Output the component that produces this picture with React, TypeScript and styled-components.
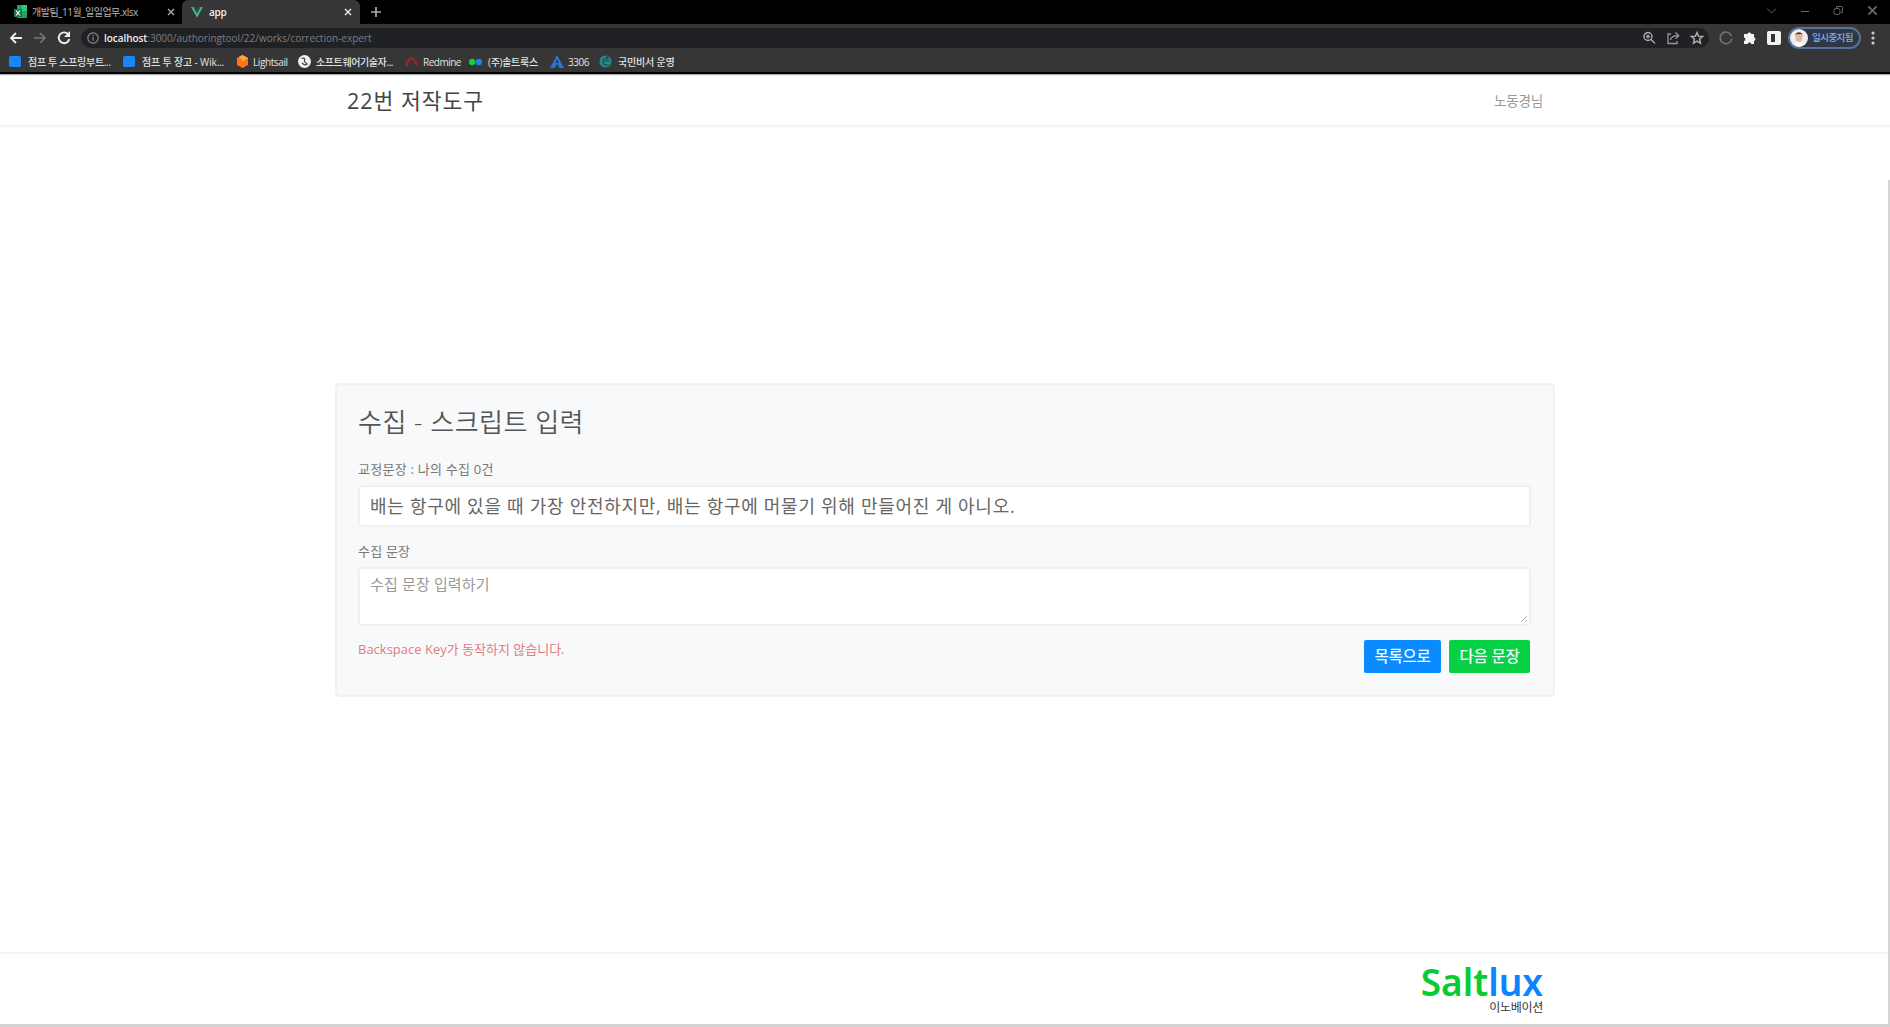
import React from "react";
import styled, { createGlobalStyle } from "styled-components";

const GlobalStyle = createGlobalStyle`
  *, *::before, *::after { box-sizing: border-box; }
  html, body { margin: 0; padding: 0; background: #fff; overflow: hidden; }
  body { font-family: "Open Sans", "Noto Sans CJK KR", sans-serif; }
  svg { display: block; flex: none; }
`;

const Screen = styled.div`
  display: flex;
  flex-direction: column;
  position: relative;
  width: 1890px;
  height: 1027px;
  background: #fff;
  border-bottom: 3px solid #d2d2d2;
`;

const Label = styled.span<{ $size: number; $color: string; $gap?: number; $weight?: number }>`
  font-size: ${(p) => p.$size}px;
  line-height: 1.4;
  font-weight: ${(p) => p.$weight ?? 400};
  letter-spacing: ${(p) => p.$gap ?? 0}px;
  color: ${(p) => p.$color};
  white-space: nowrap;
`;

/* Browser window */
const Browser = styled.header`
  flex: none;
  height: 74px;
  background: #363636;
  border-bottom: 2px solid #000;
  box-shadow: 0 1px 1px #aaa;
`;

const TabStrip = styled.div`
  display: flex;
  height: 24px;
  background: #000;
`;

const Tab = styled.div<{ $width: number; $active?: boolean }>`
  display: flex;
  align-items: center;
  width: ${(p) => p.$width}px;
  height: 24px;
  padding: 0 ${(p) => (p.$active ? "8px 0 9px" : "7px 0 14px")};
  gap: ${(p) => (p.$active ? 6 : 5)}px;
  border-radius: 6px 6px 0 0;
  background: ${(p) => (p.$active ? "#363636" : "#000")};
  svg:last-child { margin-left: auto; }
`;

const NewTab = styled.div`
  display: flex;
  align-items: center;
  padding-left: 11px;
`;

const WindowButtons = styled.div`
  display: flex;
  align-items: center;
  gap: 23px;
  height: 21px;
  margin-left: auto;
  padding-right: 12px;
`;

const Toolbar = styled.div`
  display: flex;
  align-items: center;
  height: 28px;
  padding: 0 15px 0 9px;
`;

const NavButtons = styled.div`
  display: flex;
  gap: 10px;
  width: 72px;
`;

const Address = styled.div`
  display: flex;
  align-items: center;
  width: 1628px;
  height: 20px;
  padding: 0 5px 0 6px;
  border-radius: 10px;
  background: #202124;
  > svg:first-child { margin-right: 5px; }
`;

const AddressIcons = styled.div`
  display: flex;
  gap: 10px;
  margin-left: auto;
`;

const Extensions = styled.div`
  display: flex;
  align-items: center;
  gap: 10px;
  margin-left: auto;
`;

const Profile = styled.div`
  display: flex;
  align-items: center;
  gap: 4px;
  width: 73px;
  height: 22px;
  margin-left: -3px;
  border: 2px solid #54719f;
  border-radius: 11px;
  background: #303746;
`;

const Bookmarks = styled.nav`
  display: flex;
  align-items: center;
  height: 19px;
  padding-left: 9px;
`;

const Bookmark = styled.div<{ $width: number; $gap?: number }>`
  display: flex;
  align-items: center;
  width: ${(p) => p.$width}px;
  gap: ${(p) => p.$gap ?? 6}px;
`;

/* Application page */
const PageHeader = styled.header`
  display: flex;
  flex: none;
  align-items: center;
  justify-content: space-between;
  height: 53px;
  padding: 3px 347px 0 347px;
  border-bottom: 2px solid #f3f5f5;
`;

const Main = styled.main`
  display: flex;
  flex: 1;
  justify-content: center;
  align-items: flex-start;
  padding-top: 256px;
`;

const Card = styled.section`
  display: flex;
  flex-direction: column;
  width: 1220px;
  height: 314px;
  padding: 19px 22px 0 21px;
  border: 2px solid #eff1f2;
  border-radius: 5px;
  background: #f8f9fb;
`;

const Title = styled.h1`
  height: 36px;
  margin: 0;
  font-size: 26px;
  line-height: 36px;
  font-weight: 350;
  letter-spacing: 0.5px;
  white-space: nowrap;
  color: #555;
`;

const FieldLabel = styled.div<{ $top: number }>`
  display: flex;
  align-items: center;
  height: 20px;
  margin: ${(p) => p.$top}px 0 6px;
`;

const Field = styled.div`
  display: flex;
  align-items: center;
  height: 42px;
  padding: 1px 10px 0;
  border: 2px solid #eef0f1;
  border-radius: 4px;
  background: #fff;
`;

const TextArea = styled.div`
  display: flex;
  align-items: flex-start;
  justify-content: space-between;
  height: 59px;
  padding: 5px 1px 1px 10px;
  border: 2px solid #eef0f1;
  border-radius: 4px;
  background: #fff;
  svg { align-self: flex-end; }
`;

const Actions = styled.div`
  display: flex;
  align-items: flex-start;
  justify-content: space-between;
  padding: 14px 1px 0 0;
`;

const ButtonGroup = styled.div`
  display: flex;
  gap: 8px;
`;

const Button = styled.button<{ $color: string; $width: number }>`
  width: ${(p) => p.$width}px;
  height: 33px;
  padding: 0 0 2px;
  border: 0;
  border-radius: 2px;
  background: ${(p) => p.$color};
  color: #f3f8ff;
  font: 500 15.5px "Open Sans", "Noto Sans CJK KR", sans-serif;
  letter-spacing: -0.2px;
  white-space: nowrap;
`;

const Footer = styled.footer`
  display: flex;
  flex: none;
  flex-direction: column;
  align-items: flex-end;
  height: 72px;
  padding: 8px 347px 0 0;
  border-top: 2px solid #f3f3f3;
`;

const Brand = styled.div`
  height: 39px;
  font: 600 37px/39px "Noto Sans", "Open Sans", sans-serif;
  letter-spacing: 0;
  color: #06cc33;
  span { color: #0a84ff; }
`;

const BrandSub = styled.div`
  height: 14px;
  font-size: 12px;
  line-height: 14px;
  letter-spacing: -0.3px;
  color: #333;
`;

const Scrollbar = styled.div`
  position: absolute;
  top: 180px;
  right: 0;
  width: 2px;
  height: 844px;
  background: #d4d4d4;
`;

const Close = ({ color = "#ccc", size = 8 }: { color?: string; size?: number }) => (
  <svg width={size} height={size} viewBox="0 0 8 8" stroke={color} strokeWidth="1.4">
    <path d="M1 1l6 6M7 1L1 7" />
  </svg>
);

const markText = { $size: 10, $color: "#e2e2e2", $weight: 500 };

export default function App() {
  return (
    <>
      <GlobalStyle />
      <Screen>
        <Browser>
          <TabStrip>
            <Tab $width={182}>
              <svg width="13" height="14" viewBox="0 0 13 14">
                <rect x="3" y="0" width="10" height="13" rx="1" fill="#21a366" />
                <path d="M8 0h5v6H8z" fill="#33c481" />
                <rect y="4" width="8" height="8" fill="#107c41" />
                <path d="M2 5.5l4 5M6 5.5l-4 5" stroke="#fff" strokeWidth="1.2" />
              </svg>
              <Label $size={10} $color="#b6b6b6" $gap={-0.5}>개발팀_11월_일일업무.xlsx</Label>
              <Close color="#aaa" />
            </Tab>
            <Tab $width={178} $active>
              <svg width="12" height="11" viewBox="0 0 12 11">
                <path d="M0 0h2.5L6 6.2 9.5 0H12L6 10.7z" fill="#41b883" />
                <path d="M2.5 0h2.2L6 2.4 7.3 0h2.2L6 6.2z" fill="#35495e" />
              </svg>
              <Label $size={10} $color="#eee" $gap={-0.3} $weight={600}>app</Label>
              <Close color="#eee" />
            </Tab>
            <NewTab>
              <svg width="10" height="10" viewBox="0 0 10 10" stroke="#aaa" strokeWidth="1.7"><path d="M5 0v10M0 5h10" /></svg>
            </NewTab>
            <WindowButtons>
              <svg width="11" height="8" viewBox="0 0 11 8" fill="none" stroke="#666"><path d="M1 1.5l4.5 4.5L10 1.5" /></svg>
              <svg width="10" height="8" viewBox="0 0 10 8" stroke="#666"><path d="M1 4.5h8" /></svg>
              <svg width="11" height="11" viewBox="0 0 11 11" fill="none" stroke="#666"><rect x="1" y="3.5" width="6" height="6" rx="2" /><path d="M3.5 3V1.5h5a1 1 0 011 1v5H8" /></svg>
              <Close color="#666" size={11} />
            </WindowButtons>
          </TabStrip>
          <Toolbar>
            <NavButtons>
              <svg width="14" height="14" viewBox="0 0 14 14" fill="none" stroke="#eee" strokeWidth="1.8"><path d="M13 7H2M7 2L2 7l5 5" /></svg>
              <svg width="14" height="14" viewBox="0 0 14 14" fill="none" stroke="#777" strokeWidth="1.6"><path d="M1 7h11M7 2l5 5-5 5" /></svg>
              <svg width="14" height="14" viewBox="0 0 14 14" fill="none" stroke="#eee" strokeWidth="1.9"><path d="M11.2 3.2A5.4 5.4 0 1012.4 8" /><path d="M13 0v6H7z" fill="#eee" stroke="none" /></svg>
            </NavButtons>
            <Address>
              <svg width="12" height="12" viewBox="0 0 12 12" fill="none" stroke="#8b8b8b" strokeWidth="1.2"><circle cx="6" cy="6" r="5.2" /><path d="M6 5.2v3.6M6 3v1.2" /></svg>
              <Label $size={10} $color="#eee" $gap={-0.05} $weight={600}>localhost</Label>
              <Label $size={10} $color="#7d7e80">:3000/authoringtool/22/works/correction-expert</Label>
              <AddressIcons>
                <svg width="14" height="14" viewBox="0 0 14 14" fill="none" stroke="#aaa" strokeWidth="1.4"><circle cx="6" cy="5.5" r="4" /><path d="M9 8.5l4 4M4 5.5h4M6 3.5v4" /></svg>
                <svg width="14" height="14" viewBox="0 0 14 14" fill="none" stroke="#999" strokeWidth="1.3"><path d="M5 3H2v9.5h9V10M4.5 9C5 6 7 4.7 12 4.7M9.5 1.5l3.2 3.2-3.2 3.2" /></svg>
                <svg width="14" height="14" viewBox="0 0 14 14" fill="none" stroke="#aaa" strokeWidth="1.5"><path d="M7 1.5l1.6 3.7 4 .3-3 2.6.9 4L7 10l-3.5 2.1.9-4-3-2.6 4-.3z" /></svg>
              </AddressIcons>
            </Address>
            <Extensions>
              <svg width="14" height="14" viewBox="0 0 14 14" fill="none" stroke="#777" strokeWidth="1.5"><path d="M12.5 5.2a5.8 5.8 0 10.2 2.6" /></svg>
              <svg width="14" height="14" viewBox="0 0 14 14" fill="#f2f2f2"><path d="M1 3h3.5a2 2 0 013.8 0H11v3.2a1.9 1.9 0 010 3.7V13H8.2a1.8 1.8 0 00-3.5 0H1v-3a1.8 1.8 0 000-3.5z" /></svg>
              <svg width="14" height="14" viewBox="0 0 14 14"><rect width="14" height="14" rx="2" fill="#f2f2f2" /><rect x="4" y="3" width="7" height="8" fill="#333" /><path d="M8 3h3v8H8z" fill="#f2f2f2" /></svg>
              <Profile>
                <svg width="18" height="18" viewBox="0 0 18 18"><circle cx="9" cy="9" r="9" fill="#eee" /><path d="M5 16c0-4 8-4 8 0-2 2-6 2-8 0z" fill="#fff" /><ellipse cx="9" cy="8.5" rx="3.5" ry="4.5" fill="#e3b49f" /><path d="M5 7c0-5 8-5 8 0l-1-2-6 .2z" fill="#473a35" /></svg>
                <Label $size={9.5} $color="#8ab0ef" $gap={-0.55} $weight={500}>일시중지됨</Label>
              </Profile>
              <svg width="4" height="14" viewBox="0 0 4 14" fill="#ccc"><circle cx="2" cy="2" r="1.6" /><circle cx="2" cy="7" r="1.6" /><circle cx="2" cy="12" r="1.6" /></svg>
            </Extensions>
          </Toolbar>
          <Bookmarks>
            <Bookmark $width={114} $gap={7}>
              <svg width="12" height="11"><rect width="12" height="11" rx="1.5" fill="#1687f5" /></svg>
              <Label {...markText} $gap={-0.3}>점프 투 스프링부트...</Label>
            </Bookmark>
            <Bookmark $width={113} $gap={7}>
              <svg width="12" height="11"><rect width="12" height="11" rx="1.5" fill="#1687f5" /></svg>
              <Label {...markText} $gap={-0.15}>점프 투 장고 - Wik...</Label>
            </Bookmark>
            <Bookmark $width={62} $gap={4}>
              <svg width="13" height="13" viewBox="0 0 13 13"><path d="M6.5 0l5.5 3v7l-5.5 3L1 10V3z" fill="#ff7417" /><path d="M3 1.8L6.5 0l5.5 3-5 3.5z" fill="#ffa043" /></svg>
              <Label {...markText} $gap={-0.4}>Lightsail</Label>
            </Bookmark>
            <Bookmark $width={107} $gap={5}>
              <svg width="13" height="13" viewBox="0 0 13 13"><circle cx="6.5" cy="6.5" r="6.5" fill="#f1f1f1" /><path d="M3.5 3.5c2-1 4 0 3 2s2 2 3 4M4 8c2 2 4 2 5 1" stroke="#444" strokeWidth="1.2" fill="none" /></svg>
              <Label {...markText} $gap={-0.4}>소프트웨어기술자...</Label>
            </Bookmark>
            <Bookmark $width={64} $gap={5}>
              <svg width="13" height="11" viewBox="0 0 13 11"><path d="M1.5 10C1.5 0 11.5 0 11.5 10" fill="none" stroke="#ad2022" strokeWidth="2.7" strokeDasharray="4 .6" /></svg>
              <Label {...markText} $gap={-0.5}>Redmine</Label>
            </Bookmark>
            <Bookmark $width={81}>
              <svg width="13" height="8" viewBox="0 0 13 8"><circle cx="3.2" cy="4" r="3.2" fill="#18cf3f" /><circle cx="9.8" cy="4" r="3.2" fill="#1686ef" /></svg>
              <Label {...markText} $gap={-0.3}>(주)솔트룩스</Label>
            </Bookmark>
            <Bookmark $width={49} $gap={4}>
              <svg width="14" height="13" viewBox="0 0 14 13"><path d="M7 0l7 13H9.5L7 9l-2.5 4H0z" fill="#2875dd" /><path d="M7 4l1.5 4h-3z" fill="#18345c" /></svg>
              <Label {...markText} $gap={-0.5}>3306</Label>
            </Bookmark>
            <Bookmark $width={90}>
              <svg width="13" height="13" viewBox="0 0 13 13"><circle cx="6.5" cy="6.5" r="6" fill="#258b8c" /><path d="M10 3.5Q4 1.5 4 6.5t6 3M5 6h6M8 1v4" fill="none" stroke="#164e52" strokeWidth="1.2" /></svg>
              <Label {...markText} $gap={-0.2}>국민비서 운영</Label>
            </Bookmark>
          </Bookmarks>
        </Browser>
        <PageHeader>
          <Label $size={21.5} $color="#444" $gap={1}>22번 저작도구</Label>
          <Label $size={13.5} $color="#999" $gap={-0.2}>노동경님</Label>
        </PageHeader>
        <Main>
          <Card>
            <Title>수집 - 스크립트 입력</Title>
            <FieldLabel $top={19}>
              <Label $size={13} $color="#777" $gap={0.25}>교정문장 : 나의 수집 0건</Label>
            </FieldLabel>
            <Field>
              <Label $size={18} $color="#666" $gap={0.71}>배는 항구에 있을 때 가장 안전하지만, 배는 항구에 머물기 위해 만들어진 게 아니오.</Label>
            </Field>
            <FieldLabel $top={14}>
              <Label $size={13} $color="#777" $gap={0.2}>수집 문장</Label>
            </FieldLabel>
            <TextArea>
              <Label $size={15} $color="#999" $gap={0.15}>수집 문장 입력하기</Label>
              <svg width="8" height="8" viewBox="0 0 8 8" stroke="#aaa"><path d="M1 7l6-6M5 7l2-2" /></svg>
            </TextArea>
            <Actions>
              <Label $size={13} $color="#df7c80">Backspace Key가 동작하지 않습니다.</Label>
              <ButtonGroup>
                <Button $color="#0a8bff" $width={77}>목록으로</Button>
                <Button $color="#08d044" $width={81}>다음 문장</Button>
              </ButtonGroup>
            </Actions>
          </Card>
        </Main>
        <Footer>
          <Brand>Salt<span>lux</span></Brand>
          <BrandSub>이노베이션</BrandSub>
        </Footer>
        <Scrollbar />
      </Screen>
    </>
  );
}
